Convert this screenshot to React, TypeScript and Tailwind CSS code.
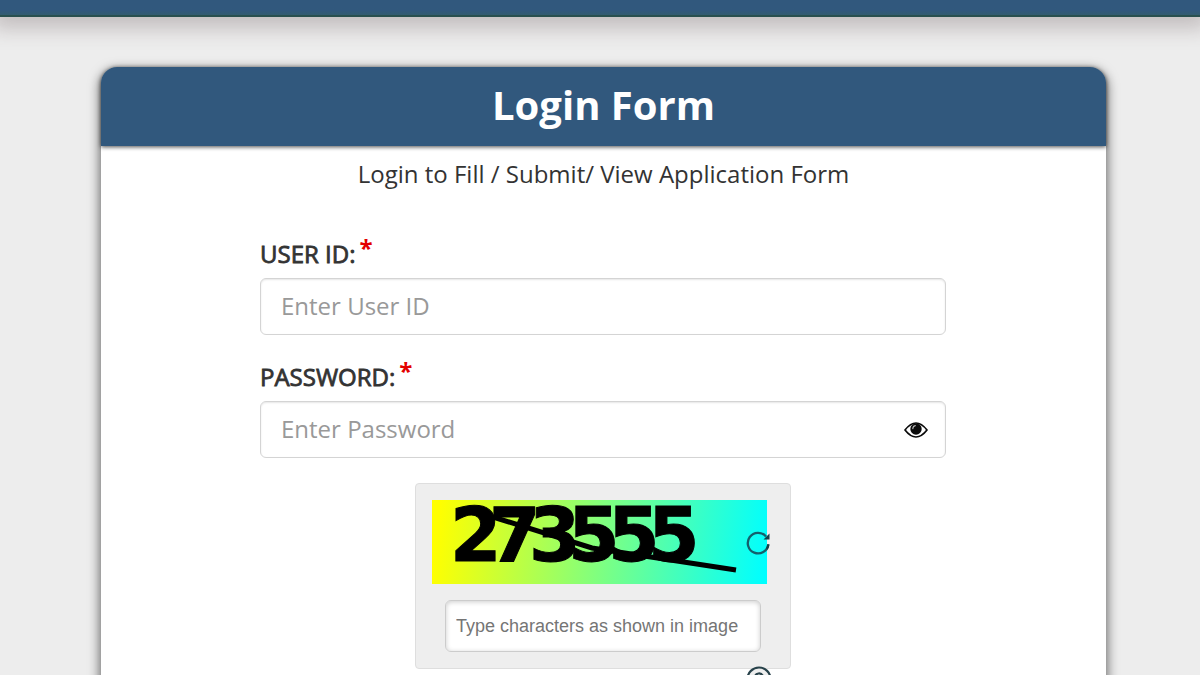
import { useState } from "react";

const fieldClass =
  "h-[57px] w-full rounded-md border border-[#d4d4d4] bg-white px-5 pb-0.5 text-2xl text-[#555] placeholder-[#999] shadow-[inset_0_1px_2px_rgba(0,0,0,0.1)] outline-none";

function FieldLabel({ htmlFor, text }: { htmlFor: string; text: string }) {
  return (
    <label
      htmlFor={htmlFor}
      className="flex h-8 items-center gap-1 text-2xl text-[#333] [-webkit-text-stroke:0.8px_#333]"
    >
      {text}
      <span className="mb-3 text-2xl font-bold text-[#e30000] [-webkit-text-stroke:0px]">*</span>
    </label>
  );
}

function EyeIcon() {
  return (
    <svg viewBox="0 0 24 16" className="h-4 w-6" aria-hidden="true">
      <path d="M1 8Q12-6 23 8Q12 22 1 8Z" fill="#fff" stroke="#0a0a0a" strokeWidth="1.7" strokeLinejoin="round" />
      <circle cx="12" cy="7" r="5.7" fill="#0a0a0a" />
      <path d="M8.8 6.6Q9 4 11.3 3.6" fill="none" stroke="#bbb" strokeWidth="1.1" strokeLinecap="round" />
    </svg>
  );
}

function RefreshIcon() {
  return (
    <svg viewBox="0 0 24 24" className="size-6" aria-hidden="true">
      <path d="M20 5.5A10.3 10.3 0 1 0 22.3 13.5" fill="none" stroke="#14606c" strokeWidth="2.3" />
      <path d="M23.5 2.5V8.5H17.5Z" fill="#173f48" />
      <path d="M22.3 13.2Q22.2 16 20.8 18" fill="none" stroke="#173f48" strokeWidth="2.3" />
    </svg>
  );
}

function AudioIcon() {
  return (
    <svg viewBox="0 0 26 26" className="size-6.5" aria-hidden="true">
      <circle cx="13" cy="13" r="11.5" fill="#eee" stroke="#27414a" strokeWidth="2.2" />
      <path d="M9 11.5a4 4 0 1 1 5.5 3.7c-1 .4-1.5 1-1.5 2.3M13 19v2" fill="none" stroke="#27414a" strokeWidth="2.2" />
    </svg>
  );
}

function CaptchaImage() {
  return (
    <svg viewBox="0 0 335 84" className="block w-full" role="img" aria-label="Captcha">
      <defs>
        <linearGradient id="captcha-bg" gradientUnits="userSpaceOnUse" x1="6" y1="20" x2="334" y2="64">
          <stop offset="0" stopColor="#ffff00" />
          <stop offset="1" stopColor="#00ffff" />
        </linearGradient>
      </defs>
      <rect width="335" height="84" fill="url(#captcha-bg)" />
      {/* digits run into each other */}
      <text
        x="18 57 97 136 176 216"
        y="61"
        fill="#000"
        stroke="#000"
        strokeWidth="1"
        fontFamily="DejaVu Sans, sans-serif"
        fontWeight="700"
        fontSize="74"
      >
        273555
      </text>
      <path d="M61 17L160 48L304 70" fill="none" stroke="#000" strokeWidth="5" />
    </svg>
  );
}

export default function App() {
  const [visible, setVisible] = useState(false);

  return (
    <div className="h-screen overflow-hidden bg-[#ededed] font-['Open_Sans',sans-serif] text-[#333]">
      <header className="h-[17px] border-b-2 border-[#29504f] bg-linear-to-b from-[#31587d] from-70% to-[#335c70] shadow-[0_4px_20px_8px_rgba(80,60,65,0.26)]" />

      <main className="pt-[50px] pr-[94px] pl-[101px]">
        <div className="rounded-t-2xl bg-white pb-20 shadow-[0_4px_12px_1px_rgba(0,0,0,0.6)]">
          <h1 className="rounded-t-2xl bg-[#31587d] pt-2.5 pb-3.5 text-center text-[40px] leading-[55px] font-bold text-white shadow-[0_1px_4px_rgba(0,0,0,0.7)]">
            Login Form
          </h1>
          <p className="pt-3 text-center text-2xl leading-8">Login to Fill / Submit/ View Application Form</p>

          <form className="mr-[160px] ml-[159px] mt-12" onSubmit={(e) => e.preventDefault()}>
            <div className="mb-[26px]">
              <FieldLabel htmlFor="user-id" text="USER ID:" />
              <input id="user-id" type="text" placeholder="Enter User ID" className={`${fieldClass} mt-2`} />
            </div>

            <div className="mb-[25px]">
              <FieldLabel htmlFor="password" text="PASSWORD:" />
              <div className="relative mt-2">
                <input
                  id="password"
                  type={visible ? "text" : "password"}
                  placeholder="Enter Password"
                  className={fieldClass}
                />
                <button
                  type="button"
                  aria-label="Show password"
                  onClick={() => setVisible(!visible)}
                  className="absolute inset-y-0 right-[18px] flex items-center"
                >
                  <EyeIcon />
                </button>
              </div>
            </div>

            {/* Captcha */}
            <div className="relative mx-auto w-94 rounded border border-[#dedede] bg-[#eee] px-4 py-4">
              <div className="mr-[7px]">
                <CaptchaImage />
              </div>
              <button type="button" aria-label="Refresh captcha" className="absolute top-[47px] right-5">
                <RefreshIcon />
              </button>
              <input
                type="text"
                aria-label="Captcha"
                placeholder="Type characters as shown in image"
                className="mx-[13px] mt-4 block h-[52px] w-[316px] rounded-md border border-[#ccc] bg-white px-2.5 font-['Liberation_Sans',sans-serif] text-lg placeholder-[#757575] shadow-[inset_0_1px_5px_rgba(0,0,0,0.2)] outline-none"
              />
              <button type="button" aria-label="Play audio captcha" className="absolute top-[182px] right-[18px]">
                <AudioIcon />
              </button>
            </div>
          </form>
        </div>
      </main>
    </div>
  );
}
